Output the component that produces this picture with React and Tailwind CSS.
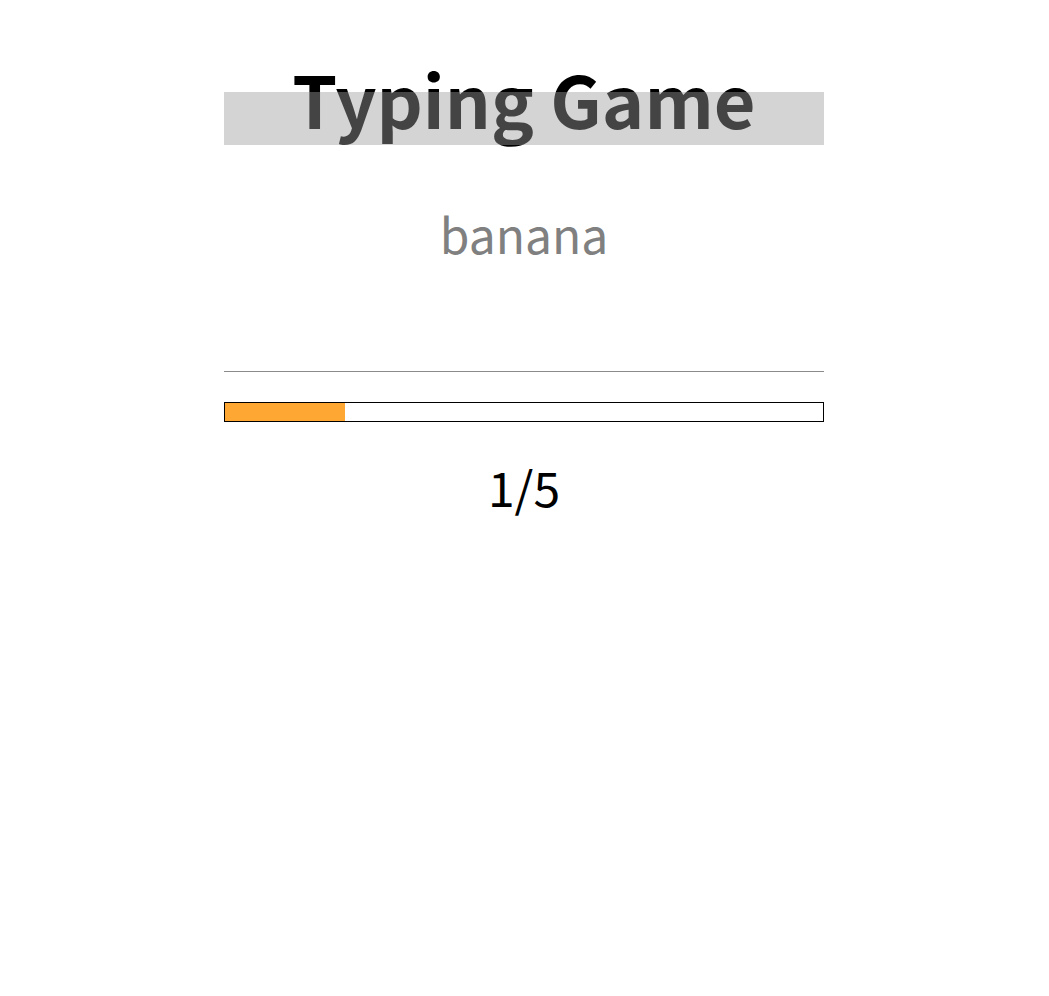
export default function App() {
  const progress = 1 / 5;
  return (
    <div className="min-h-screen bg-white pr-px">
      <div
        className="mx-auto w-[600px] pt-[92px] flex flex-col items-center"
        style={{ fontFamily: '"Noto Sans CJK JP", "Noto Sans", sans-serif' }}
      >
        <div className="relative w-full h-[53px] flex justify-center">
          <h1 className="absolute top-[-30px] left-0 right-0 text-center text-[72px] font-bold leading-none text-black whitespace-nowrap">
            Typing Game
          </h1>
          <div className="absolute inset-0 bg-[rgba(156,156,156,0.435)]"></div>
        </div>
        <div className="mt-[64px] text-[48px] leading-none text-[#808080]">banana</div>
        <div className="mt-[114px] w-full h-px bg-[#8c8c8c]"></div>
        <div className="mt-[30px] w-full h-[20px] border border-black">
          <div className="h-full bg-[#ffa733]" style={{ width: `${progress * 100}%` }}></div>
        </div>
        <div className="mt-[40px] text-[48px] leading-none text-black">1/5</div>
      </div>
    </div>
  );
}
